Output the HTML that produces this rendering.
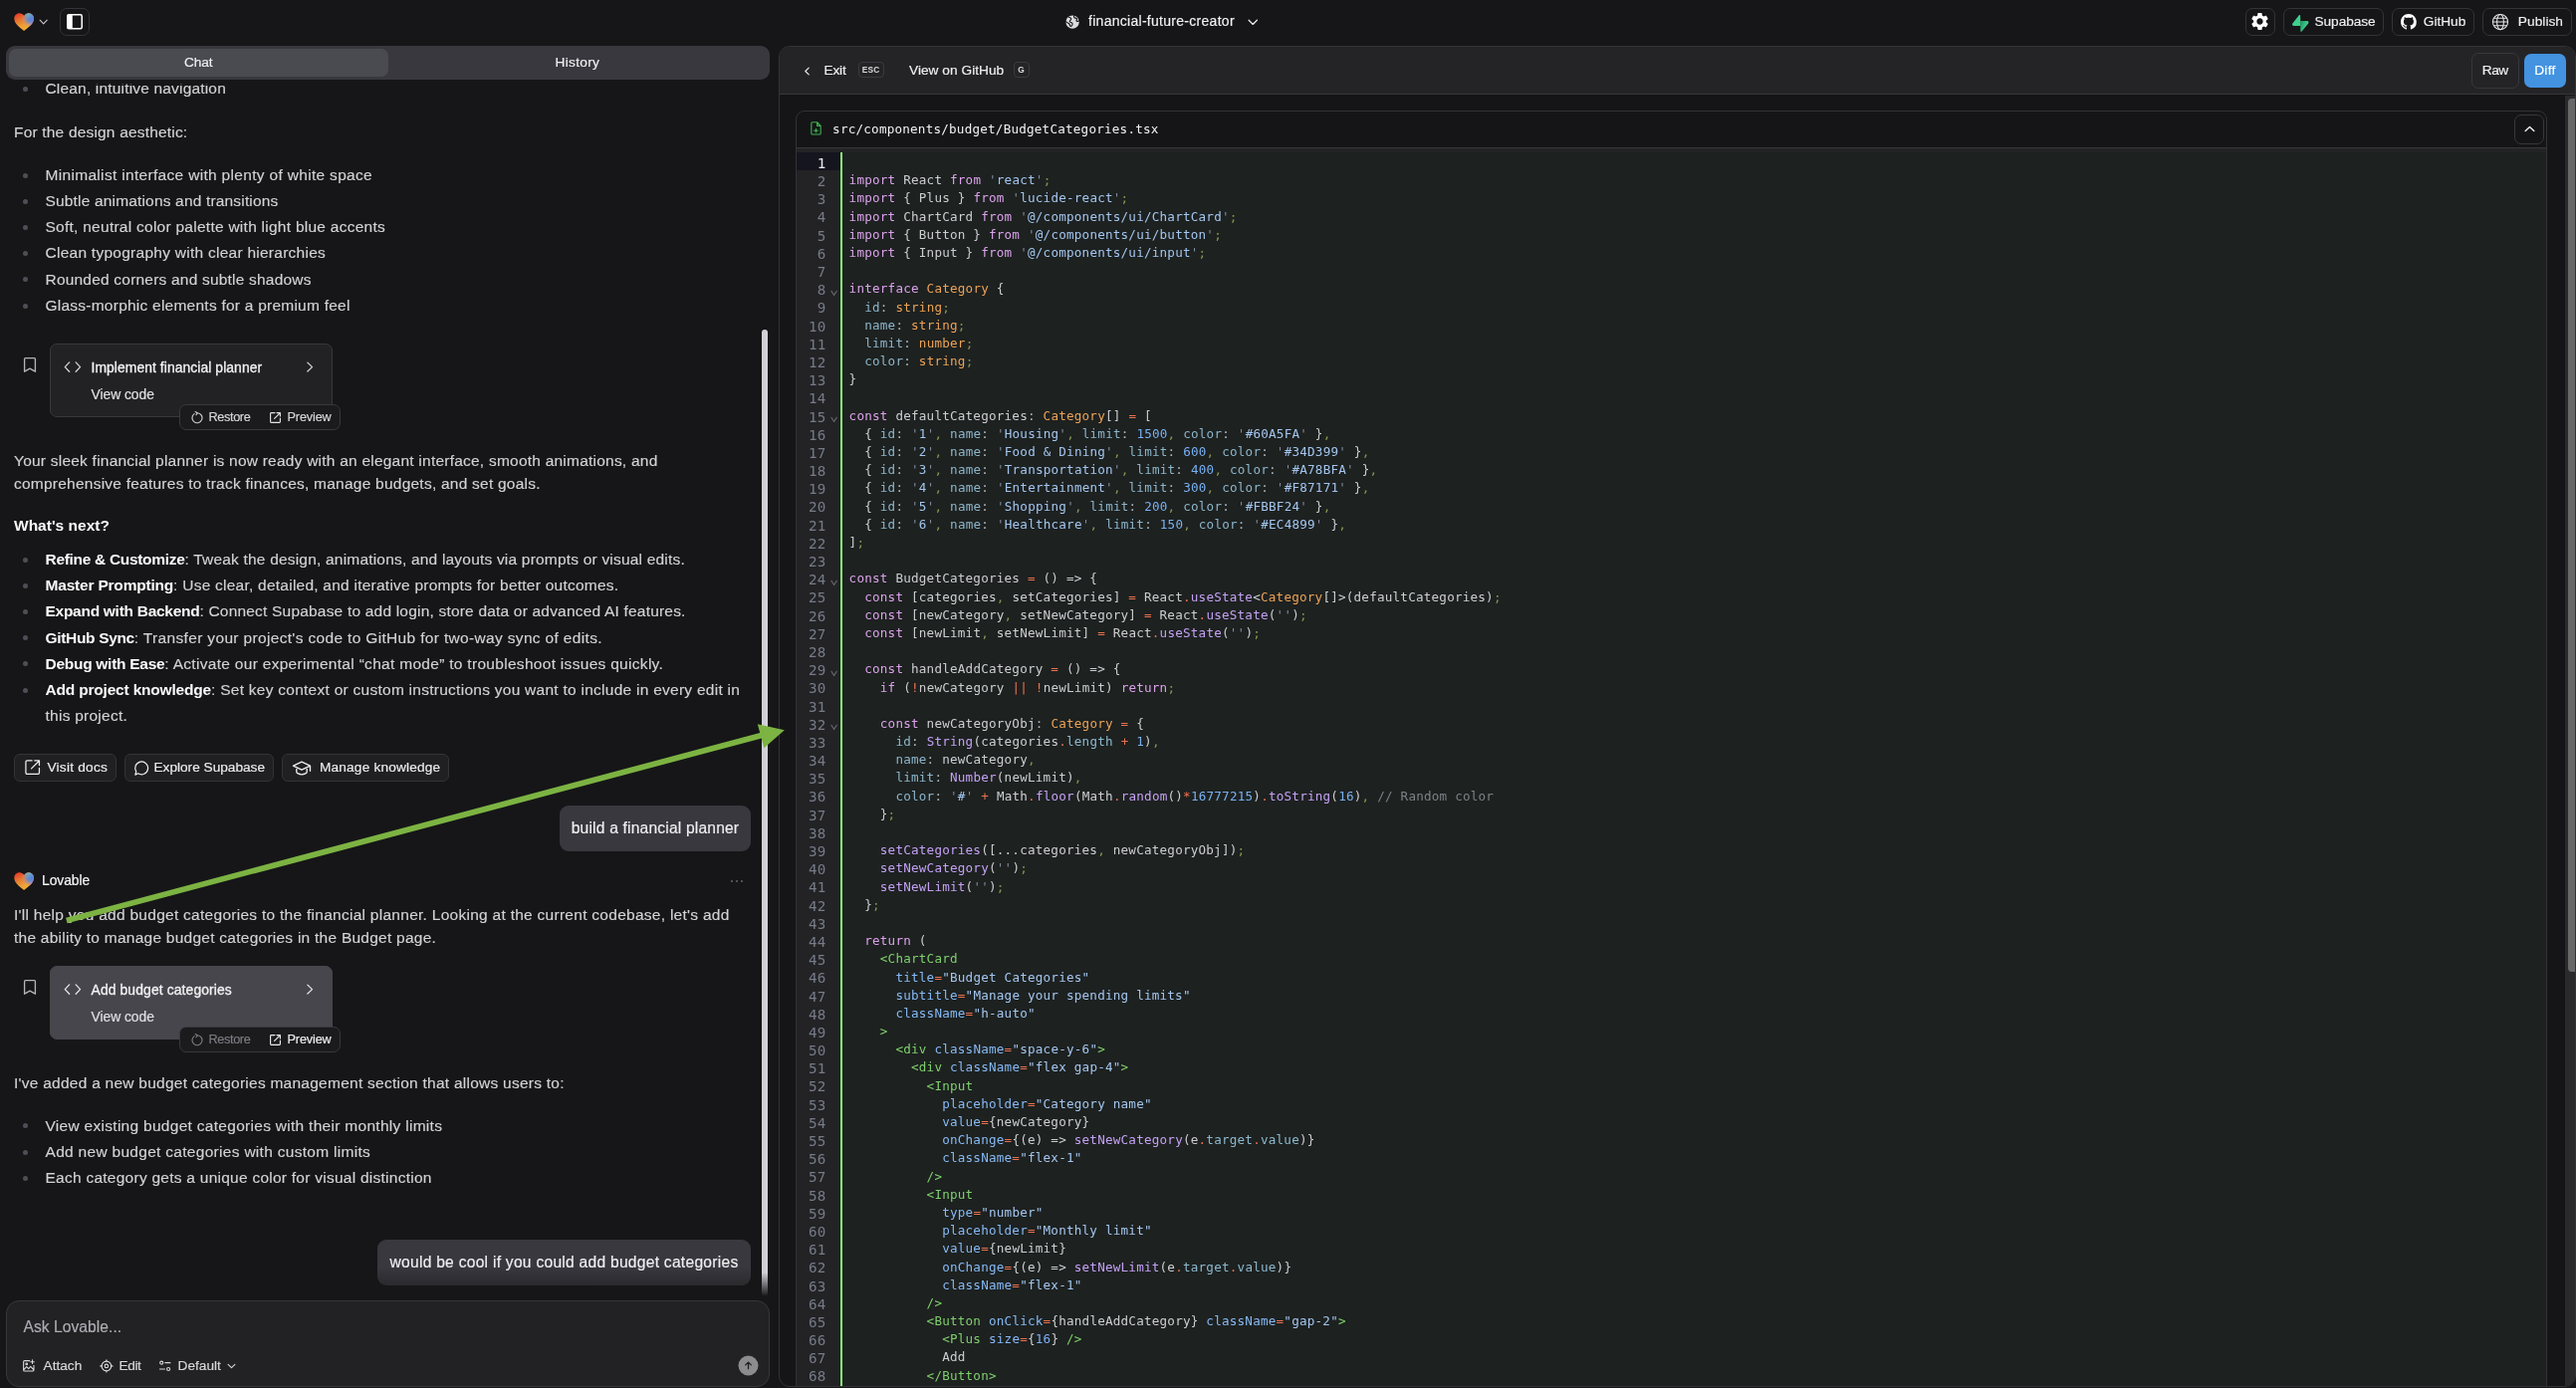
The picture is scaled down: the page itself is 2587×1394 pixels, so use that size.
<!DOCTYPE html>
<html lang="en"><head>
<meta charset="utf-8">
<title>financial-future-creator</title>
<style>
*{box-sizing:border-box;margin:0;padding:0}
html,body{width:2587px;height:1394px;overflow:hidden;background:#161618}
body{font-family:"Liberation Sans",sans-serif;color:#d4d4d8;position:relative;will-change:transform;-webkit-text-stroke-width:.15px}
svg{display:block}
.abs{position:absolute}
/* ---------- top bar ---------- */
#top{position:absolute;left:0;top:0;width:2587px;height:44px}
.tbtn{position:absolute;top:8px;height:27.6px;border:1px solid #333338;border-radius:7px;color:#f0f0f2;font-size:13.7px;line-height:26px;white-space:nowrap}
.tbtn svg{position:absolute}
.tbtn span{position:absolute;top:0}
#proj{position:absolute;left:1093px;top:10.2px;font-size:14px;line-height:22px;color:#f2f2f4;white-space:nowrap}
/* ---------- left ---------- */
#tabs{position:absolute;left:6px;top:46px;width:767px;height:34px;background:#38383e;border-radius:9px;z-index:5}
#tabs .on{position:absolute;left:3px;top:3px;width:381px;height:28px;background:#4a4a51;border-radius:7px}
#tabs span{position:absolute;top:0;line-height:34px;font-size:13.7px;color:#f0f0f2}
#chat{position:absolute;left:0;top:83.6px;width:778px;height:1222.4px;overflow:hidden;font-size:15.5px;line-height:23.1px;color:#d2d2d6}
#chat p{position:absolute;left:14px;width:740px;white-space:nowrap}
#chat ul{position:absolute;left:0;list-style:none;white-space:nowrap}
#chat li{position:relative;padding-left:45.5px;line-height:26.2px;height:26.2px}
#chat li:before{content:"";position:absolute;left:22.5px;top:10.7px;width:5px;height:5px;border-radius:50%;background:#4e4e58}
#chat li.nb:before{display:none}
#chat b{color:#fafafa;font-weight:700;-webkit-text-stroke-width:0}
.card{position:absolute;left:50px;width:284px;height:73.5px;border:1px solid #38383d;border-radius:7px;background:#222225}
.card.on{background:#46464c;border-color:#46464c}
.card .t{position:absolute;left:40.5px;top:12px;font-size:13.9px;color:#f4f4f6;line-height:22px;white-space:nowrap;-webkit-text-stroke:.28px #f4f4f6}
.card .v{position:absolute;left:40.5px;top:38.7px;font-size:13.9px;color:#e0e0e4;line-height:22px;white-space:nowrap}
.pill{position:absolute;left:180px;width:162px;height:26px;border:1px solid #38383d;border-radius:7px;background:#1b1b1e;font-size:12.7px;line-height:24px;color:#d8d8dc;white-space:nowrap}
.pill span{position:absolute;top:0}
.act{position:absolute;top:757px;height:28px;border:1px solid #333338;border-radius:6px;background:#202023;font-size:13.7px;line-height:26px;color:#ededf0;white-space:nowrap}
.act span{position:absolute;top:0}
.bub{position:absolute;height:46px;background:#38383e;border-radius:9px;font-size:15.6px;line-height:46px;color:#f0f0f2;text-align:center;white-space:nowrap}
#fade{position:absolute;left:0;top:1272px;width:760px;height:34px;background:linear-gradient(rgba(22,22,24,0),rgba(22,22,24,.75))}
#sb{position:absolute;left:765px;top:331px;width:6px;height:971px;border-radius:3px;background:linear-gradient(#d1d0d6 0,#d1d0d6 947px,rgba(209,208,214,0) 971px)}
#inp{position:absolute;left:6px;top:1306px;width:767px;height:87px;border:1px solid #37373c;border-radius:13px;background:#222225;z-index:4}
#inp .ph{position:absolute;left:16.5px;top:15.2px;font-size:15.6px;line-height:22px;color:#adadb3}
#inp .o{position:absolute;top:54px;font-size:13.7px;line-height:22px;color:#d8d8dc;white-space:nowrap}
/* ---------- right ---------- */
#right{position:absolute;left:782px;top:46px;width:1805px;height:1347px;border:1px solid #323237;border-radius:11px;background:#151518;overflow:hidden}
#rbar{position:absolute;left:0;top:0;width:1810px;height:48px;background:#242427;border-bottom:1px solid #37373c}
#rbar .x{position:absolute;top:12.8px;font-size:13.7px;line-height:22px;color:#f0f0f2;white-space:nowrap}
.kbd{-webkit-text-stroke-width:0;position:absolute;top:15.4px;height:16px;border:1px solid #3a3a40;border-radius:4px;font-size:8.3px;line-height:15px;font-weight:700;color:#d8d8dc;text-align:center;letter-spacing:.2px}
#file{position:absolute;left:16.1px;top:63.8px;width:1759.3px;height:1290px;border:1px solid #323237;border-radius:9px;background:#151518;overflow:hidden}
#fhead{-webkit-text-stroke-width:0;position:absolute;left:0;top:0;width:100%;height:37.5px;border-bottom:1px solid #37373c;font-family:"DejaVu Sans Mono","Liberation Mono",monospace;font-size:12.6px;letter-spacing:.215px;line-height:37.6px;color:#f0f0f2}
#fhead span{position:absolute;left:36px;top:-.5px;white-space:pre}
#ed{position:absolute;left:0;top:37.5px;width:100%;height:1260px;background:#1d2120}
.gut{-webkit-text-stroke-width:0;position:absolute;left:0;top:0;width:44px;height:100%;padding-top:3.6px;background:#232326;font-family:"DejaVu Sans Mono","Liberation Mono",monospace;font-size:14.2px;letter-spacing:.1px;color:#767b87;text-align:right}
.gut div{height:18.19px;line-height:22.4px;padding-right:14.8px;position:relative}
.gut div.cur{background:#15151f;color:#e8e8ec}
.gut i{position:absolute;right:4.3px;top:9.6px;width:5.2px;height:5.2px;border-right:1.1px solid #666a74;border-bottom:1.1px solid #666a74;transform:scale(.92,1.35) rotate(45deg)}
#bar{position:absolute;left:43.9px;top:3.6px;width:2.4px;height:1300px;background:#8ff07e}
pre.code{-webkit-text-stroke-width:0;position:absolute;left:52.5px;top:4.8px;font-family:"DejaVu Sans Mono","Liberation Mono",monospace;font-size:12.6px;letter-spacing:.215px;line-height:18.19px;color:#cdcdd0;white-space:pre}
.k{color:#dba1ea}.t{color:#eaa256}.s{color:#a3c5ee}.q{color:#7f8b9b}.p{color:#8b9650}.o{color:#ea7250}.cl{color:#b0b8c0}
.pk{color:#8cb4c9}.n{color:#79b0f2}.f{color:#c3a0f3}.m{color:#8cb8cd}.g{color:#7fcf6c}.a{color:#86b9f4}.c{color:#7f8084}
#rsb{position:absolute;left:1792.5px;top:49px;width:12px;height:1299px;background:#2a2a2d}
#rsb div{position:absolute;left:3.5px;top:3px;width:9px;height:877px;border-radius:4px 0 0 4px;background:#686868}
</style>
</head>
<body>
<svg width="0" height="0" style="position:absolute"><defs>
<linearGradient id="hg1" x1="0.12" y1="0.1" x2="0.55" y2="0.95"><stop offset="0" stop-color="#e8432a"></stop><stop offset=".4" stop-color="#e57f33"></stop><stop offset=".75" stop-color="#eda238"></stop><stop offset="1" stop-color="#f5ac33"></stop></linearGradient>
<radialGradient id="hg2" cx="0.9" cy="0.3" r="0.52"><stop offset="0" stop-color="#5b7fe6"></stop><stop offset=".4" stop-color="#5f88d2" stop-opacity=".95"></stop><stop offset=".72" stop-color="#9a8fae" stop-opacity=".55"></stop><stop offset="1" stop-color="#d89a70" stop-opacity="0"></stop></radialGradient>
<radialGradient id="hg3" cx="0.7" cy="0.05" r="0.3"><stop offset="0" stop-color="#62b4c4" stop-opacity=".9"></stop><stop offset="1" stop-color="#62b4c4" stop-opacity="0"></stop></radialGradient>
<radialGradient id="hg4" cx="0.93" cy="0.62" r="0.2"><stop offset="0" stop-color="#b07ae0" stop-opacity=".8"></stop><stop offset="1" stop-color="#c88cc8" stop-opacity="0"></stop></radialGradient>
<symbol id="heart" viewBox="0 0 21 19"><path d="M10.5 18.6C8.8 17.2 0.3 11.9 0.3 5.9 0.3 2.7 2.8 0.3 5.7 0.3c2 0 3.8 1.1 4.8 2.8 1-1.7 2.8-2.8 4.8-2.8 2.9 0 5.4 2.4 5.4 5.6 0 6-8.5 11.3-10.2 12.700z" fill="url(#hg1)"></path><path d="M10.5 18.6C8.8 17.2 0.3 11.9 0.3 5.9 0.3 2.7 2.8 0.3 5.7 0.3c2 0 3.8 1.1 4.8 2.8 1-1.7 2.8-2.8 4.8-2.8 2.9 0 5.4 2.4 5.4 5.6 0 6-8.5 11.3-10.2 12.700z" fill="url(#hg2)"></path><path d="M10.5 18.6C8.8 17.2 0.3 11.9 0.3 5.9 0.3 2.7 2.8 0.3 5.7 0.3c2 0 3.8 1.1 4.8 2.8 1-1.7 2.8-2.8 4.8-2.8 2.9 0 5.4 2.4 5.4 5.6 0 6-8.5 11.3-10.2 12.700z" fill="url(#hg3)"></path><path d="M10.5 18.6C8.8 17.2 0.3 11.9 0.3 5.9 0.3 2.7 2.8 0.3 5.7 0.3c2 0 3.8 1.1 4.8 2.8 1-1.7 2.8-2.8 4.8-2.8 2.9 0 5.4 2.4 5.4 5.6 0 6-8.5 11.3-10.2 12.700z" fill="url(#hg4)"></path></symbol>
</defs></svg>
<div id="top">
<svg class="abs" style="left:13.8px;top:12.8px" width="20.3" height="18.4"><use href="#heart"></use></svg>
<svg class="abs" style="left:39.2px;top:18.7px" width="9.4" height="6.6" viewBox="0 0 10 7" fill="none" stroke="#c8c8cc" stroke-width="1.2" stroke-linecap="round" stroke-linejoin="round"><path d="M1.2 1.3 5 5.2 8.8 1.3"></path></svg>
<div class="tbtn" style="left:60px;width:30px"><svg style="left:6.4px;top:5.3px" width="16" height="15.4" viewBox="0 0 16 15.4"><rect x=".75" y=".75" width="14.5" height="13.9" rx="1.5" fill="none" stroke="#fff" stroke-width="1.5"></rect><rect x=".75" y=".75" width="5" height="13.9" fill="#fff"></rect></svg></div>
<svg class="abs" style="left:1070px;top:14.8px" width="14.2" height="14.2" viewBox="0 0 14 14"><circle cx="7" cy="7" r="6.6" fill="#dcdce0"></circle><path d="M3.2 2.2c1 .2 2.3 .6 2.5 1.6.2 1.1-1.2 1.3-1.4 2.3-.2.9.7 1.3 1.6 1.5.9.2 1.2 1 1 1.9-.2.8-.9 1.6-1.6 1.7-.6.1-.9-.6-1-1.5-.1-.8-.9-1.2-1.7-1.7C1.9 7.6 1 7.2.6 6.6M8.6.9c-.3.8-.3 1.6.5 2 .8.4 1.8-.1 2.2.7.3.7-.6 1.3-.4 2.1.2.7 1.2.9 1.8.5l.7-.5" fill="none" stroke="#161618" stroke-width="1.1" stroke-linecap="round"></path></svg>
<div id="proj"><span style="letter-spacing: 0.284px;">financial-future-creator</span></div>
<svg class="abs" style="left:1253px;top:18.6px" width="10.5" height="7" viewBox="0 0 12 8" fill="none" stroke="#e8e8ec" stroke-width="1.5" stroke-linecap="round" stroke-linejoin="round"><path d="M1.3 1.5 6 6.2 10.7 1.5"></path></svg>
<div class="tbtn" style="left:2255px;width:30px"><svg style="left:3.4px;top:2.4px" width="21" height="21" viewBox="0 0 24 24" fill="#fff"><path d="M19.14 12.94c.04-.3.06-.61.06-.94 0-.32-.02-.64-.07-.94l2.030-1.580a.49.49 0 0 0 .12-.61l-1.920-3.320a.488.488 0 0 0-.59-.22l-2.390.96c-.5-.38-1.030-.7-1.620-.94l-.36-2.540a.484.484 0 0 0-.48-.41h-3.840c-.24 0-.43.17-.47.41l-.36 2.540c-.59.24-1.130.57-1.620.94l-2.390-.96c-.22-.08-.47 0-.59.22L2.740 8.870c-.12.21-.08.47.12.61l2.030 1.580c-.05.3-.09.63-.09.94s.02.64.07.94l-2.030 1.580a.49.49 0 0 0-.12.61l1.920 3.320c.12.22.37.29.59.22l2.390-.96c.5.38 1.030.7 1.620.94l.36 2.540c.05.24.24.41.48.41h3.840c.24 0 .44-.17.47-.41l.36-2.540c.59-.24 1.130-.56 1.620-.94l2.390.96c.22.08.47 0 .59-.22l1.920-3.320c.12-.22.07-.47-.12-.61l-2.010-1.580zM12 15.600c-1.980 0-3.600-1.620-3.600-3.600s1.620-3.600 3.600-3.600 3.600 1.620 3.600 3.600-1.620 3.600-3.600 3.600z"></path></svg></div>
<div class="tbtn" style="left:2293px;width:101px"><svg style="left:8.3px;top:5.5px" width="16.5" height="17" viewBox="0 0 109 113"><defs><linearGradient id="sg" x1="53.97" y1="54.97" x2="94.16" y2="71.83" gradientUnits="userSpaceOnUse"><stop stop-color="#249361"></stop><stop offset="1" stop-color="#3ecf8e"></stop></linearGradient></defs><path d="M63.7076 110.284C60.8481 113.885 55.0502 111.912 54.9813 107.314L53.9738 40.0627L99.1935 40.0627C107.384 40.0627 111.952 49.5228 106.859 55.9374L63.7076 110.284Z" fill="url(#sg)"></path><path d="M45.317 2.07103C48.1765 -1.53037 53.9745 0.442937 54.0434 5.041L54.4849 72.2922H9.83113C1.64038 72.2922 -2.92775 62.8321 2.1655 56.4175L45.317 2.07103Z" fill="#3ecf8e"></path></svg><span style="left:30.5px"><span style="letter-spacing: -0.065px;">Supabase</span></span></div>
<div class="tbtn" style="left:2402px;width:83px"><svg style="left:8.2px;top:5px" width="15.8" height="15.8" viewBox="0 0 16 16" fill="#fff"><path d="M8 0C3.580 0 0 3.580 0 8c0 3.540 2.290 6.530 5.470 7.590.4.070.550-.17.550-.38 0-.19-.010-.820-.010-1.490-2.010.37-2.530-.49-2.690-.94-.090-.23-.480-.94-.820-1.130-.280-.15-.680-.52-.010-.53.630-.010 1.080.58 1.230.82.720 1.210 1.870.87 2.330.66.070-.52.280-.87.510-1.070-1.780-.2-3.640-.89-3.640-3.950 0-.87.310-1.590.820-2.150-.080-.2-.360-1.020.080-2.120 0 0 .670-.21 2.200.82.640-.18 1.320-.27 2-.27s1.360.09 2 .27c1.530-1.040 2.200-.82 2.200-.82.440 1.100.160 1.920.080 2.120.510.56.820 1.270.820 2.150 0 3.070-1.870 3.750-3.650 3.950.290.25.540.73.540 1.480 0 1.070-.010 1.930-.010 2.200 0 .21.150.46.550.38A8.013 8.013 0 0 0 16 8c0-4.420-3.580-8-8-8z"></path></svg><span style="left:30.8px"><span style="letter-spacing: -0.022px;">GitHub</span></span></div>
<div class="tbtn" style="left:2493px;width:90px"><svg style="left:8.3px;top:4.3px" width="18" height="18" viewBox="0 0 18 18" fill="none" stroke="#e8e8ec" stroke-width="1.05"><circle cx="9" cy="9" r="7.6"></circle><ellipse cx="9" cy="9" rx="3.4" ry="7.6"></ellipse><path d="M1.4 9h15.2M2.4 5.2h13.2M2.4 12.8h13.2"></path></svg><span style="left:34.8px"><span style="letter-spacing: 0.049px;">Publish</span></span></div>
</div>

<div id="tabs"><div class="on"></div><span style="left:179px"><span style="letter-spacing: -0.107px;">Chat</span></span><span style="left:551.5px"><span style="letter-spacing: 0.301px;">History</span></span></div>
<div id="chat"><div id="ci" style="position:absolute;left:0;top:-83.6px;width:778px;height:1400px">
<ul style="top:76.3px"><li><span style="letter-spacing: 0.179px;">Clean, intuitive navigation</span></li></ul>
<p style="top:121.2px"><span style="letter-spacing: 0.185px;">For the design aesthetic:</span></p>
<ul style="top:162.9px">
<li><span style="letter-spacing: 0.318px;">Minimalist interface with plenty of white space</span></li>
<li><span style="letter-spacing: 0.171px;">Subtle animations and transitions</span></li>
<li><span style="letter-spacing: 0.26px;">Soft, neutral color palette with light blue accents</span></li>
<li><span style="letter-spacing: 0.261px;">Clean typography with clear hierarchies</span></li>
<li><span style="letter-spacing: 0.205px;">Rounded corners and subtle shadows</span></li>
<li><span style="letter-spacing: 0.239px;">Glass-morphic elements for a premium feel</span></li>
</ul>
<svg class="abs" style="left:22px;top:357px" width="16" height="19" viewBox="0 0 16 19" fill="none" stroke="#b4b4b8" stroke-width="1.35" stroke-linejoin="round"><path d="M2.6 3.6c0-.6.4-1 1-1h8.8c.6 0 1 .4 1 1v12.6l-5.4-3-5.4 3z"></path></svg>
<div class="card" style="top:345px">
<svg class="abs" style="left:13.2px;top:17.3px" width="17.8" height="11.2" viewBox="0 0 19 12" fill="none" stroke="#d6d6da" stroke-width="1.35" stroke-linecap="round" stroke-linejoin="round"><path d="M6 1 1.3 6 6 11M13 1l4.7 5L13 11"></path></svg>
<span class="t"><span style="letter-spacing: 0.066px;">Implement financial planner</span></span>
<svg class="abs" style="left:255.5px;top:17.3px" width="8.4" height="11.2" viewBox="0 0 9 12" fill="none" stroke="#d6d6da" stroke-width="1.35" stroke-linecap="round" stroke-linejoin="round"><path d="M2 1.2 7 6 2 10.8"></path></svg>
<span class="v"><span style="letter-spacing: -0.055px;">View code</span></span>
</div>
<div class="pill" style="top:406px">
<svg class="abs" style="left:10px;top:6px" width="13" height="13" viewBox="0 0 13 13" fill="none" stroke="#d0d0d4" stroke-width="1.15" stroke-linecap="round" stroke-linejoin="round"><path d="M4.1 2.6A5 5 0 1 0 7.2 1.7M7.2 1.7 5.2 0.6M7.2 1.7 6 3.7"></path></svg>
<span style="left:28.5px"><span style="letter-spacing: -0.356px;">Restore</span></span>
<svg class="abs" style="left:89px;top:6px" width="13" height="13" viewBox="0 0 13 13" fill="none" stroke="#e4e4e8" stroke-width="1.15" stroke-linecap="round" stroke-linejoin="round"><path d="M11.4 7v3.6c0 .5-.4.8-.8.8H2.4c-.5 0-.8-.4-.8-.8V2.4c0-.5.4-.8.8-.8H6M8 1.6h3.4V5M11.4 1.6 5.6 7.4"></path></svg>
<span style="left:107.5px"><span style="letter-spacing: -0.154px;">Preview</span></span>
</div>
<p style="top:450.8px;line-height:23.1px"><span style="letter-spacing: 0.227px;">Your sleek financial planner is now ready with an elegant interface, smooth animations, and</span><br><span style="letter-spacing: 0.236px;">comprehensive features to track finances, manage budgets, and set goals.</span></p>
<p style="top:516.3px"><b><span style="letter-spacing: 0.005px;">What's next?</span></b></p>
<ul style="top:549.0px">
<li><b><span style="letter-spacing: -0.31px;">Refine &amp; Customize</span></b><span style="letter-spacing: 0.198px;">: Tweak the design, animations, and layouts via prompts or visual edits.</span></li>
<li><b><span style="letter-spacing: -0.198px;">Master Prompting</span></b><span style="letter-spacing: 0.24px;">: Use clear, detailed, and iterative prompts for better outcomes.</span></li>
<li><b><span style="letter-spacing: -0.278px;">Expand with Backend</span></b><span style="letter-spacing: 0.197px;">: Connect Supabase to add login, store data or advanced AI features.</span></li>
<li><b><span style="letter-spacing: -0.332px;">GitHub Sync</span></b><span style="letter-spacing: 0.337px;">: Transfer your project's code to GitHub for two-way sync of edits.</span></li>
<li><b><span style="letter-spacing: -0.281px;">Debug with Ease</span></b><span style="letter-spacing: 0.299px;">: Activate our experimental “chat mode” to troubleshoot issues quickly.</span></li>
<li><b><span style="letter-spacing: -0.191px;">Add project knowledge</span></b><span style="letter-spacing: 0.263px;">: Set key context or custom instructions you want to include in every edit in</span></li>
<li class="nb"><span style="letter-spacing: 0.253px;">this project.</span></li>
</ul>
<div class="act" style="left:14px;width:103px">
<svg class="abs" style="left:9.2px;top:4.4px" width="17.4" height="17.4" viewBox="0 0 18 18" fill="none" stroke="#ededf0" stroke-width="1.3" stroke-linecap="round" stroke-linejoin="round"><path d="M16 9.6v5c0 .8-.6 1.4-1.4 1.4H3.4C2.6 16 2 15.4 2 14.6V3.4C2 2.6 2.6 2 3.4 2h5M11.2 2H16v4.8M16 2 7.8 10.2"></path></svg>
<span style="left:32.5px"><span style="letter-spacing: 0.219px;">Visit docs</span></span></div>
<div class="act" style="left:125px;width:150px">
<svg class="abs" style="left:8px;top:5px" width="17" height="17" viewBox="0 0 18 18" fill="none" stroke="#ededf0" stroke-width="1.3" stroke-linecap="round" stroke-linejoin="round"><path d="M5 14.6A6.8 6.8 0 1 0 2.9 12.5L2 16z"></path></svg>
<span style="left:28.5px"><span style="letter-spacing: -0.024px;">Explore Supabase</span></span></div>
<div class="act" style="left:283px;width:168px">
<svg class="abs" style="left:9px;top:5px" width="20" height="18" viewBox="0 0 20 18" fill="none" stroke="#ededf0" stroke-width="1.35" stroke-linecap="round" stroke-linejoin="round"><path d="M10 2.2 1.5 6.2 10 10.2 18.5 6.2zM4.8 7.8v4.4c0 1.2 2.3 2.6 5.2 2.6s5.2-1.4 5.2-2.6V7.8M18.5 6.2v5"></path></svg>
<span style="left:37px"><span style="letter-spacing: 0.159px;">Manage knowledge</span></span></div>
<div class="bub" style="left:562px;top:809px;width:192px"><span style="letter-spacing: 0.185px;">build a financial planner</span></div>
<svg class="abs" style="left:13.9px;top:875.8px" width="20.3" height="18.4"><use href="#heart"></use></svg>
<span class="abs" style="left:42px;top:872.8px;font-size:13.9px;line-height:22px;color:#f4f4f6;-webkit-text-stroke:.2px #f4f4f6;white-space:nowrap"><span style="letter-spacing: -0.079px;">Lovable</span></span>
<svg class="abs" style="left:733px;top:883px" width="14" height="4" viewBox="0 0 14 4" fill="#9c9ca2"><circle cx="2" cy="2" r=".8"></circle><circle cx="7" cy="2" r=".8"></circle><circle cx="12" cy="2" r=".8"></circle></svg>
<p style="top:908.1px;line-height:22.9px"><span style="letter-spacing: 0.274px;">I'll help you add budget categories to the financial planner. Looking at the current codebase, let's add</span><br><span style="letter-spacing: 0.251px;">the ability to manage budget categories in the Budget page.</span></p>
<svg class="abs" style="left:22px;top:982px" width="16" height="19" viewBox="0 0 16 19" fill="none" stroke="#b4b4b8" stroke-width="1.35" stroke-linejoin="round"><path d="M2.6 3.6c0-.6.4-1 1-1h8.8c.6 0 1 .4 1 1v12.6l-5.4-3-5.4 3z"></path></svg>
<div class="card on" style="top:970px">
<svg class="abs" style="left:13.2px;top:17.3px" width="17.8" height="11.2" viewBox="0 0 19 12" fill="none" stroke="#e6e6ea" stroke-width="1.35" stroke-linecap="round" stroke-linejoin="round"><path d="M6 1 1.3 6 6 11M13 1l4.7 5L13 11"></path></svg>
<span class="t"><span style="letter-spacing: 0.114px;">Add budget categories</span></span>
<svg class="abs" style="left:255.5px;top:17.3px" width="8.4" height="11.2" viewBox="0 0 9 12" fill="none" stroke="#e6e6ea" stroke-width="1.35" stroke-linecap="round" stroke-linejoin="round"><path d="M2 1.2 7 6 2 10.8"></path></svg>
<span class="v"><span style="letter-spacing: -0.055px;">View code</span></span>
</div>
<div class="pill" style="top:1031px">
<svg class="abs" style="left:10px;top:6px" width="13" height="13" viewBox="0 0 13 13" fill="none" stroke="#7c7c82" stroke-width="1.15" stroke-linecap="round" stroke-linejoin="round"><path d="M4.1 2.6A5 5 0 1 0 7.2 1.7M7.2 1.7 5.2 0.6M7.2 1.7 6 3.7"></path></svg>
<span style="left:28.5px;color:#7c7c82"><span style="letter-spacing: -0.356px;">Restore</span></span>
<svg class="abs" style="left:89px;top:6px" width="13" height="13" viewBox="0 0 13 13" fill="none" stroke="#ececf0" stroke-width="1.15" stroke-linecap="round" stroke-linejoin="round"><path d="M11.4 7v3.6c0 .5-.4.8-.8.8H2.4c-.5 0-.8-.4-.8-.8V2.4c0-.5.4-.8.8-.8H6M8 1.6h3.4V5M11.4 1.6 5.6 7.4"></path></svg>
<span style="left:107.5px;color:#f0f0f2"><span style="letter-spacing: -0.154px;">Preview</span></span>
</div>
<p style="top:1076.0px"><span style="letter-spacing: 0.254px;">I've added a new budget categories management section that allows users to:</span></p>
<ul style="top:1117.8px">
<li><span style="letter-spacing: 0.289px;">View existing budget categories with their monthly limits</span></li>
<li><span style="letter-spacing: 0.297px;">Add new budget categories with custom limits</span></li>
<li><span style="letter-spacing: 0.254px;">Each category gets a unique color for visual distinction</span></li>
</ul>
<div class="bub" style="left:379px;top:1245px;width:375px"><span style="letter-spacing: 0.265px;">would be cool if you could add budget categories</span></div>
</div></div>
<div id="fade"></div>
<div id="sb"></div>
<div id="inp">
<span class="ph"><span style="letter-spacing: 0.057px;">Ask Lovable...</span></span>
<svg class="abs" style="left:15.2px;top:58.2px" width="13.6" height="13.6" viewBox="0 0 15 15" fill="none" stroke="#d8d8dc" stroke-width="1.2" stroke-linecap="round" stroke-linejoin="round"><path d="M8.5 1.8H3c-.7 0-1.2.5-1.2 1.2v9c0 .7.5 1.2 1.2 1.2h9c.7 0 1.2-.5 1.2-1.2V7M11.6 1v4M9.6 3h4M2.2 11.6l3-3.2 2.2 2.2 2.3-2.4 3.2 3.4"></path><circle cx="5.2" cy="5.4" r=".9"></circle></svg>
<span class="o" style="left:36.5px"><span style="letter-spacing: -0.003px;">Attach</span></span>
<svg class="abs" style="left:93.2px;top:57.8px" width="13.8" height="13.8" viewBox="0 0 15 15" fill="none" stroke="#d8d8dc" stroke-width="1.2" stroke-linecap="round" stroke-linejoin="round"><circle cx="7.5" cy="7.5" r="5.2"></circle><circle cx="7.5" cy="7.5" r="1.9"></circle><path d="M7.5 .8v2M7.5 12.2v2M.8 7.5h2M12.2 7.5h2"></path></svg>
<span class="o" style="left:112.5px"><span style="letter-spacing: -0.431px;">Edit</span></span>
<svg class="abs" style="left:152.3px;top:58.4px" width="13.6" height="13.6" viewBox="0 0 15 15" fill="none" stroke="#d8d8dc" stroke-width="1.2" stroke-linecap="round" stroke-linejoin="round"><circle cx="3.6" cy="4" r="1.7"></circle><path d="M7.6 4h5.6M1.6 11h5.6"></path><circle cx="11.2" cy="11" r="1.7"></circle></svg>
<span class="o" style="left:171.5px"><span style="letter-spacing: 0.004px;">Default</span></span>
<svg class="abs" style="left:220.8px;top:62px" width="9" height="6.3" viewBox="0 0 10 7" fill="none" stroke="#d8d8dc" stroke-width="1.2" stroke-linecap="round" stroke-linejoin="round"><path d="M1.2 1.5 5 5.2 8.8 1.5"></path></svg>
<svg class="abs" style="left:734.2px;top:54.3px" width="21" height="21" viewBox="0 0 21 21"><circle cx="10.5" cy="10.5" r="10" fill="#8c8c8e"></circle><path d="M10.5 13.7V7.3M7.7 9.9l2.8-2.8 2.8 2.8" fill="none" stroke="#1e1e21" stroke-width="1.3" stroke-linecap="round" stroke-linejoin="round"></path></svg>
</div>

<div id="right">
<div id="rbar">
<svg class="abs" style="left:24px;top:19.6px" width="7.2" height="9" viewBox="0 0 8 10" fill="none" stroke="#e8e8ec" stroke-width="1.3" stroke-linecap="round" stroke-linejoin="round"><path d="M5.8 1.3 2 5l3.8 3.7"></path></svg>
<span class="x" style="left:44.5px"><span style="letter-spacing: -0.209px;">Exit</span></span>
<div class="kbd" style="left:78.6px;width:26px">ESC</div>
<span class="x" style="left:130px"><span style="letter-spacing: 0.026px;">View on GitHub</span></span>
<div class="kbd" style="left:234.6px;width:16px">G</div>
<div class="abs" style="left:1698.5px;top:6.3px;width:48.5px;height:35.7px;border:1px solid #37373c;border-radius:7px;font-size:13.7px;line-height:33.8px;color:#f0f0f2;text-align:center"><span style="letter-spacing: -0.495px;">Raw</span></div>
<div class="abs" style="left:1752px;top:7px;width:41.8px;height:34.2px;border-radius:7px;background:#4393e0;font-size:13.7px;line-height:34.4px;color:#fff;text-align:center"><span style="letter-spacing: 0.268px;">Diff</span></div>
</div>
<div id="file">
<div id="fhead">
<svg class="abs" style="left:13.6px;top:10.6px" width="11" height="13.8" viewBox="0 0 12 15" fill="none" stroke="#3fae4c" stroke-width="1.25" stroke-linecap="round" stroke-linejoin="round"><path d="M7.2 .8H2.1c-.7 0-1.200 .5-1.200 1.200v11c0 .7 .5 1.200 1.200 1.200h7.800c.7 0 1.200-.5 1.200-1.200V4.800zM7.200 .8v4h4M6 8v4M4 10h4"></path></svg>
<span>src/components/budget/BudgetCategories.tsx</span>
<div class="abs" style="left:1725px;top:3.5px;width:29.5px;height:29.5px;border:1px solid #37373c;border-radius:7px"><svg class="abs" style="left:8.5px;top:10px" width="11" height="7" viewBox="0 0 11 7" fill="none" stroke="#f0f0f2" stroke-width="1.4" stroke-linecap="round" stroke-linejoin="round"><path d="M1.2 5.600 5.500 1.400 9.800 5.600"></path></svg></div>
</div>
<div id="ed">
<div class="abs" style="left:0;top:0;width:100%;height:3.6px;background:#232326"></div>
<div class="gut"><div class="cur">1</div><div>2</div><div>3</div><div>4</div><div>5</div><div>6</div><div>7</div><div>8<i></i></div><div>9</div><div>10</div><div>11</div><div>12</div><div>13</div><div>14</div><div>15<i></i></div><div>16</div><div>17</div><div>18</div><div>19</div><div>20</div><div>21</div><div>22</div><div>23</div><div>24<i></i></div><div>25</div><div>26</div><div>27</div><div>28</div><div>29<i></i></div><div>30</div><div>31</div><div>32<i></i></div><div>33</div><div>34</div><div>35</div><div>36</div><div>37</div><div>38</div><div>39</div><div>40</div><div>41</div><div>42</div><div>43</div><div>44</div><div>45</div><div>46</div><div>47</div><div>48</div><div>49</div><div>50</div><div>51</div><div>52</div><div>53</div><div>54</div><div>55</div><div>56</div><div>57</div><div>58</div><div>59</div><div>60</div><div>61</div><div>62</div><div>63</div><div>64</div><div>65</div><div>66</div><div>67</div><div>68</div></div>
<pre class="code"><span></span>
<span class="k">import</span> React <span class="k">from</span> <span class="q">'</span><span class="s">react</span><span class="q">'</span><span class="p">;</span>
<span class="k">import</span> { Plus } <span class="k">from</span> <span class="q">'</span><span class="s">lucide-react</span><span class="q">'</span><span class="p">;</span>
<span class="k">import</span> ChartCard <span class="k">from</span> <span class="q">'</span><span class="s">@/components/ui/ChartCard</span><span class="q">'</span><span class="p">;</span>
<span class="k">import</span> { Button } <span class="k">from</span> <span class="q">'</span><span class="s">@/components/ui/button</span><span class="q">'</span><span class="p">;</span>
<span class="k">import</span> { Input } <span class="k">from</span> <span class="q">'</span><span class="s">@/components/ui/input</span><span class="q">'</span><span class="p">;</span>

<span class="k">interface</span> <span class="t">Category</span> {
  <span class="pk">id</span><span class="cl">:</span> <span class="t">string</span><span class="p">;</span>
  <span class="pk">name</span><span class="cl">:</span> <span class="t">string</span><span class="p">;</span>
  <span class="pk">limit</span><span class="cl">:</span> <span class="t">number</span><span class="p">;</span>
  <span class="pk">color</span><span class="cl">:</span> <span class="t">string</span><span class="p">;</span>
}

<span class="k">const</span> defaultCategories<span class="cl">:</span> <span class="t">Category</span>[] <span class="o">=</span> [
  { <span class="pk">id</span><span class="cl">:</span> <span class="q">'</span><span class="s">1</span><span class="q">'</span><span class="p">,</span> <span class="pk">name</span><span class="cl">:</span> <span class="q">'</span><span class="s">Housing</span><span class="q">'</span><span class="p">,</span> <span class="pk">limit</span><span class="cl">:</span> <span class="n">1500</span><span class="p">,</span> <span class="pk">color</span><span class="cl">:</span> <span class="q">'</span><span class="s">#60A5FA</span><span class="q">'</span> }<span class="p">,</span>
  { <span class="pk">id</span><span class="cl">:</span> <span class="q">'</span><span class="s">2</span><span class="q">'</span><span class="p">,</span> <span class="pk">name</span><span class="cl">:</span> <span class="q">'</span><span class="s">Food &amp; Dining</span><span class="q">'</span><span class="p">,</span> <span class="pk">limit</span><span class="cl">:</span> <span class="n">600</span><span class="p">,</span> <span class="pk">color</span><span class="cl">:</span> <span class="q">'</span><span class="s">#34D399</span><span class="q">'</span> }<span class="p">,</span>
  { <span class="pk">id</span><span class="cl">:</span> <span class="q">'</span><span class="s">3</span><span class="q">'</span><span class="p">,</span> <span class="pk">name</span><span class="cl">:</span> <span class="q">'</span><span class="s">Transportation</span><span class="q">'</span><span class="p">,</span> <span class="pk">limit</span><span class="cl">:</span> <span class="n">400</span><span class="p">,</span> <span class="pk">color</span><span class="cl">:</span> <span class="q">'</span><span class="s">#A78BFA</span><span class="q">'</span> }<span class="p">,</span>
  { <span class="pk">id</span><span class="cl">:</span> <span class="q">'</span><span class="s">4</span><span class="q">'</span><span class="p">,</span> <span class="pk">name</span><span class="cl">:</span> <span class="q">'</span><span class="s">Entertainment</span><span class="q">'</span><span class="p">,</span> <span class="pk">limit</span><span class="cl">:</span> <span class="n">300</span><span class="p">,</span> <span class="pk">color</span><span class="cl">:</span> <span class="q">'</span><span class="s">#F87171</span><span class="q">'</span> }<span class="p">,</span>
  { <span class="pk">id</span><span class="cl">:</span> <span class="q">'</span><span class="s">5</span><span class="q">'</span><span class="p">,</span> <span class="pk">name</span><span class="cl">:</span> <span class="q">'</span><span class="s">Shopping</span><span class="q">'</span><span class="p">,</span> <span class="pk">limit</span><span class="cl">:</span> <span class="n">200</span><span class="p">,</span> <span class="pk">color</span><span class="cl">:</span> <span class="q">'</span><span class="s">#FBBF24</span><span class="q">'</span> }<span class="p">,</span>
  { <span class="pk">id</span><span class="cl">:</span> <span class="q">'</span><span class="s">6</span><span class="q">'</span><span class="p">,</span> <span class="pk">name</span><span class="cl">:</span> <span class="q">'</span><span class="s">Healthcare</span><span class="q">'</span><span class="p">,</span> <span class="pk">limit</span><span class="cl">:</span> <span class="n">150</span><span class="p">,</span> <span class="pk">color</span><span class="cl">:</span> <span class="q">'</span><span class="s">#EC4899</span><span class="q">'</span> }<span class="p">,</span>
]<span class="p">;</span>

<span class="k">const</span> BudgetCategories <span class="o">=</span> () =&gt; {
  <span class="k">const</span> [categories<span class="p">,</span> setCategories] <span class="o">=</span> React<span class="o">.</span><span class="f">useState</span>&lt;<span class="t">Category</span>[]&gt;(defaultCategories)<span class="p">;</span>
  <span class="k">const</span> [newCategory<span class="p">,</span> setNewCategory] <span class="o">=</span> React<span class="o">.</span><span class="f">useState</span>(<span class="q">'</span><span class="q">'</span>)<span class="p">;</span>
  <span class="k">const</span> [newLimit<span class="p">,</span> setNewLimit] <span class="o">=</span> React<span class="o">.</span><span class="f">useState</span>(<span class="q">'</span><span class="q">'</span>)<span class="p">;</span>

  <span class="k">const</span> handleAddCategory <span class="o">=</span> () =&gt; {
    <span class="k">if</span> (<span class="o">!</span>newCategory <span class="o">||</span> <span class="o">!</span>newLimit) <span class="k">return</span><span class="p">;</span>

    <span class="k">const</span> newCategoryObj<span class="cl">:</span> <span class="t">Category</span> <span class="o">=</span> {
      <span class="pk">id</span><span class="cl">:</span> <span class="f">String</span>(categories<span class="o">.</span><span class="m">length</span> <span class="o">+</span> <span class="n">1</span>)<span class="p">,</span>
      <span class="pk">name</span><span class="cl">:</span> newCategory<span class="p">,</span>
      <span class="pk">limit</span><span class="cl">:</span> <span class="f">Number</span>(newLimit)<span class="p">,</span>
      <span class="pk">color</span><span class="cl">:</span> <span class="q">'</span><span class="s">#</span><span class="q">'</span> <span class="o">+</span> Math<span class="o">.</span><span class="f">floor</span>(Math<span class="o">.</span><span class="f">random</span>()<span class="o">*</span><span class="n">16777215</span>)<span class="o">.</span><span class="f">toString</span>(<span class="n">16</span>)<span class="p">,</span> <span class="c">// Random color</span>
    }<span class="p">;</span>

    <span class="f">setCategories</span>([...categories<span class="p">,</span> newCategoryObj])<span class="p">;</span>
    <span class="f">setNewCategory</span>(<span class="q">'</span><span class="q">'</span>)<span class="p">;</span>
    <span class="f">setNewLimit</span>(<span class="q">'</span><span class="q">'</span>)<span class="p">;</span>
  }<span class="p">;</span>

  <span class="k">return</span> (
    <span class="g">&lt;ChartCard</span>
      <span class="a">title</span><span class="o">=</span><span class="s">"Budget Categories"</span>
      <span class="a">subtitle</span><span class="o">=</span><span class="s">"Manage your spending limits"</span>
      <span class="a">className</span><span class="o">=</span><span class="s">"h-auto"</span>
    <span class="g">&gt;</span>
      <span class="g">&lt;div</span> <span class="a">className</span><span class="o">=</span><span class="s">"space-y-6"</span><span class="g">&gt;</span>
        <span class="g">&lt;div</span> <span class="a">className</span><span class="o">=</span><span class="s">"flex gap-4"</span><span class="g">&gt;</span>
          <span class="g">&lt;Input</span>
            <span class="a">placeholder</span><span class="o">=</span><span class="s">"Category name"</span>
            <span class="a">value</span><span class="o">=</span>{newCategory}
            <span class="a">onChange</span><span class="o">=</span>{(e) =&gt; <span class="f">setNewCategory</span>(e<span class="o">.</span><span class="m">target</span><span class="o">.</span><span class="m">value</span>)}
            <span class="a">className</span><span class="o">=</span><span class="s">"flex-1"</span>
          <span class="g">/&gt;</span>
          <span class="g">&lt;Input</span>
            <span class="a">type</span><span class="o">=</span><span class="s">"number"</span>
            <span class="a">placeholder</span><span class="o">=</span><span class="s">"Monthly limit"</span>
            <span class="a">value</span><span class="o">=</span>{newLimit}
            <span class="a">onChange</span><span class="o">=</span>{(e) =&gt; <span class="f">setNewLimit</span>(e<span class="o">.</span><span class="m">target</span><span class="o">.</span><span class="m">value</span>)}
            <span class="a">className</span><span class="o">=</span><span class="s">"flex-1"</span>
          <span class="g">/&gt;</span>
          <span class="g">&lt;Button</span> <span class="a">onClick</span><span class="o">=</span>{handleAddCategory} <span class="a">className</span><span class="o">=</span><span class="s">"gap-2"</span><span class="g">&gt;</span>
            <span class="g">&lt;Plus</span> <span class="a">size</span><span class="o">=</span>{<span class="n">16</span>} <span class="g">/&gt;</span>
            Add
          <span class="g">&lt;/Button</span><span class="g">&gt;</span></pre>
<div id="bar"></div>
</div>
</div>
<div id="rsb"><div></div></div>
</div>

<svg class="abs" style="left:0;top:0;z-index:9;pointer-events:none" width="800" height="1394" viewBox="0 0 800 1394"><path d="M66.8 924.6 L765 738.5" stroke="#7cb342" stroke-width="5.7" fill="none"></path><path d="M787.8 733.2 L760.8 727.3 L767.3 751.2z" fill="#7cb342"></path></svg>



</body></html>
